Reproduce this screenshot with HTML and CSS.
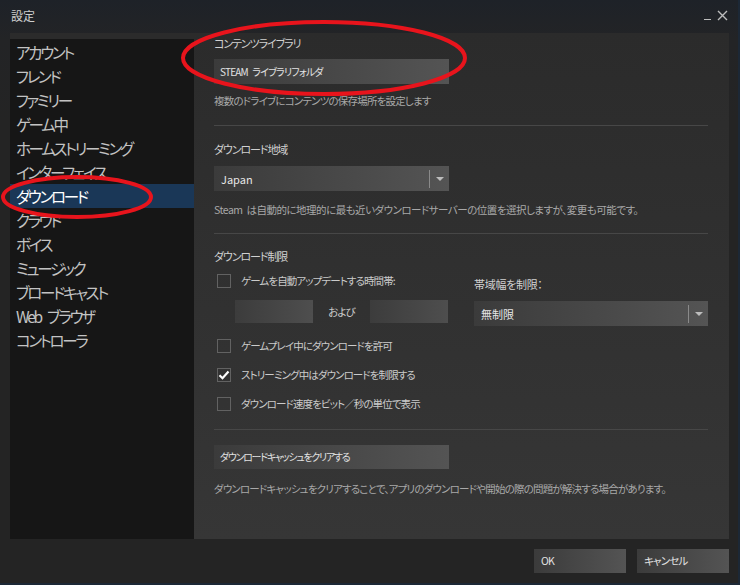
FILE: index.html
```html
<!DOCTYPE html>
<html lang="ja">
<head>
<meta charset="utf-8">
<title>設定</title>
<link rel="stylesheet" href="styles.css">
</head>
<body>
<div class="window">
  <div class="titlebar">
    <span class="title">設定</span>
    <div class="winctl">
      <span class="min"></span>
      <svg class="close" width="11" height="11" viewBox="0 0 11 11"><path d="M1 1L10 10M10 1L1 10" stroke="#bdbdbd" stroke-width="1.4" fill="none"/></svg>
    </div>
  </div>
  <div class="main">
    <nav class="sidebar">
      <div class="nav-item">アカウント</div>
      <div class="nav-item">フレンド</div>
      <div class="nav-item">ファミリー</div>
      <div class="nav-item">ゲーム中</div>
      <div class="nav-item">ホームストリーミング</div>
      <div class="nav-item">インターフェイス</div>
      <div class="nav-item active">ダウンロード</div>
      <div class="nav-item">クラウド</div>
      <div class="nav-item">ボイス</div>
      <div class="nav-item">ミュージック</div>
      <div class="nav-item">ブロードキャスト</div>
      <div class="nav-item">Web ブラウザ</div>
      <div class="nav-item">コントローラ</div>
    </nav>
    <section class="content">
      <div class="label first">コンテンツライブラリ</div>
      <div class="btn wide">STEAM ライブラリフォルダ</div>
      <div class="desc d1">複数のドライブにコンテンツの保存場所を設定します</div>
      <div class="sep s1"></div>
      <div class="label l2">ダウンロード地域</div>
      <div class="select wide s-region"><span>Japan</span><span class="caret"></span></div>
      <div class="desc d2">Steam は自動的に地理的に最も近いダウンロードサーバーの位置を選択しますが、変更も可能です。</div>
      <div class="sep s2"></div>
      <div class="label l3">ダウンロード制限</div>
      <div class="limits">
        <div class="col-left">
          <div class="check c1"><span class="box"></span><span>ゲームを自動アップデートする時間帯:</span></div>
          <div class="times">
            <span class="field"></span>
            <span class="and">および</span>
            <span class="field"></span>
          </div>
          <div class="check c2"><span class="box"></span><span>ゲームプレイ中にダウンロードを許可</span></div>
          <div class="check c3"><span class="box checked"><svg width="12" height="10" viewBox="0 0 12 10"><path d="M1.5 5.2L4.5 8.2L10.5 1.5" stroke="#fff" stroke-width="2.2" fill="none"/></svg></span><span>ストリーミング中はダウンロードを制限する</span></div>
          <div class="check c4"><span class="box"></span><span>ダウンロード速度をビット／秒の単位で表示</span></div>
        </div>
        <div class="col-right">
          <div class="label lb">帯域幅を制限：</div>
          <div class="select s-bw"><span>無制限</span><span class="caret"></span></div>
        </div>
      </div>
      <div class="sep s3"></div>
      <div class="btn wide b2">ダウンロードキャッシュをクリアする</div>
      <div class="desc d3">ダウンロードキャッシュをクリアすることで、アプリのダウンロードや開始の際の問題が解決する場合があります。</div>
    </section>
  </div>
  <div class="footer">
    <div class="btn fbtn">OK</div>
    <div class="btn fbtn">キャンセル</div>
  </div>
  <svg class="marks" width="740" height="585" viewBox="0 0 740 585">
    <ellipse cx="324" cy="58" rx="141" ry="36" fill="none" stroke="#e8141c" stroke-width="4"/>
    <ellipse cx="77" cy="197" rx="74" ry="20" fill="none" stroke="#e8141c" stroke-width="4"/>
  </svg>
</div>
</body>
</html>
```
FILE: styles.css
```css
* { box-sizing: border-box; }
html, body { margin: 0; padding: 0; }
body {
  width: 740px;
  height: 585px;
  overflow: hidden;
  background: #242424;
  font-family: "Noto Sans CJK JP", "Noto Sans", sans-serif;
  font-feature-settings: "palt";
}
.window {
  position: relative;
  width: 740px;
  height: 585px;
  background: linear-gradient(#1e2228 0px, #232426 40px, #242424 120px);
  border-right: 2px solid #1c2836;
  border-bottom: 2px solid #1c2836;
}
.titlebar {
  height: 33px;
  display: flex;
  align-items: center;
  justify-content: space-between;
  padding: 0 10px 2px 11px;
}
.title {
  color: #cfcfcf;
  font-size: 12px;
  line-height: 14px;
}
.winctl {
  display: flex;
  align-items: center;
  gap: 6px;
  margin-top: -1px;
}
.min {
  display: block;
  width: 7px;
  height: 1px;
  background: #bdbdbd;
  margin-top: 8px;
}
.close { display: block; }
.main {
  display: flex;
  height: 506px;
  margin: 0 9px 0 10px;
}
.sidebar {
  width: 184px;
  background: #161616;
  border-top: 6px solid #2b2b2b;
  padding-top: 1px;
}
.nav-item {
  height: 24px;
  line-height: 24px;
  padding-left: 6px;
  font-size: 15.5px;
  letter-spacing: -2.3px;
  word-spacing: 5px;
  color: #c3c3c3;
}
.nav-item.active {
  background: #1a3757;
  color: #ffffff;
}
.content {
  flex: 1;
  background: linear-gradient(#2b2b2b, #363636);
  padding: 3px 21px 0 20px;
  color: #cfcfcf;
  font-size: 10.5px;
}
.label {
  line-height: 14px;
  font-size: 11px;
  letter-spacing: -1.1px;
  color: #d0d0d0;
}
.btn {
  background: linear-gradient(to right, #3b3b3b, #545454);
  color: #e2e2e2;
  font-size: 10px;
  letter-spacing: -0.8px;
  word-spacing: 3px;
  line-height: 14px;
  display: flex;
  align-items: center;
  padding-left: 6px;
}
.wide { width: 235px; height: 25px; margin-top: 9px; }
.desc {
  line-height: 14px;
  color: #a8a8a8;
  font-size: 10.5px;
  letter-spacing: -0.8px;
}
.d1 { margin-top: 10px; }
.sep { height: 1px; background: #474747; }
.s1 { margin-top: 17px; }
.l2 { margin-top: 16px; }
.select {
  height: 25px;
  display: flex;
  align-items: center;
  background: linear-gradient(to right, #3b3b3b, #545454);
  color: #e6e6e6;
  font-size: 11px;
  padding-left: 7px;
  position: relative;
}
.select span:first-child { flex: 1; }
.s-region { margin-top: 10px; }
.caret {
  width: 20px;
  height: 18px;
  border-left: 1px solid #8a8a8a;
  display: flex;
  align-items: center;
  justify-content: center;
}
.caret::after {
  content: "";
  border-left: 4px solid transparent;
  border-right: 4px solid transparent;
  border-top: 4px solid #bdbdbd;
}
.d2 { margin-top: 12px; letter-spacing: -0.5px; word-spacing: 2px; }
.s2 { margin-top: 16px; }
.l3 { margin-top: 15px; }
.limits {
  display: grid;
  grid-template-columns: 260px 1fr;
  margin-top: 11px;
}
.check {
  display: flex;
  align-items: center;
  gap: 10px;
  height: 14px;
  line-height: 14px;
  padding-left: 3px;
  color: #cbcbcb;
  font-size: 10.5px;
  letter-spacing: -0.9px;
}
.box {
  flex: none;
  width: 14px;
  height: 14px;
  border: 1px solid #626262;
  display: flex;
  align-items: center;
  justify-content: center;
}
.times {
  display: flex;
  align-items: center;
  margin: 12px 0 0 21px;
  height: 23px;
}
.field {
  width: 78px;
  height: 23px;
  background: linear-gradient(to right, #3c3c3c, #4e4e4e);
}
.and {
  width: 57px;
  text-align: center;
  color: #cbcbcb;
  font-size: 10.5px;
  letter-spacing: -1px;
}
.c2 { margin-top: 16px; }
.c3 { margin-top: 15px; }
.c4 { margin-top: 15px; }
.lb { margin-top: 3px; letter-spacing: -0.3px; }
.s-bw { margin-top: 10px; width: 234px; }
.s3 { margin-top: 18px; }
.b2 { margin-top: 15px; height: 24px; letter-spacing: -1.3px; }
.d3 { margin-top: 13px; }
.footer {
  display: flex;
  justify-content: flex-end;
  gap: 11px;
  padding: 10px 9px 0 0;
}
.fbtn {
  width: 92px;
  height: 24px;
  padding-left: 7px;
  font-size: 10.5px;
}
.marks {
  position: absolute;
  left: 0;
  top: 0;
  pointer-events: none;
}
```
